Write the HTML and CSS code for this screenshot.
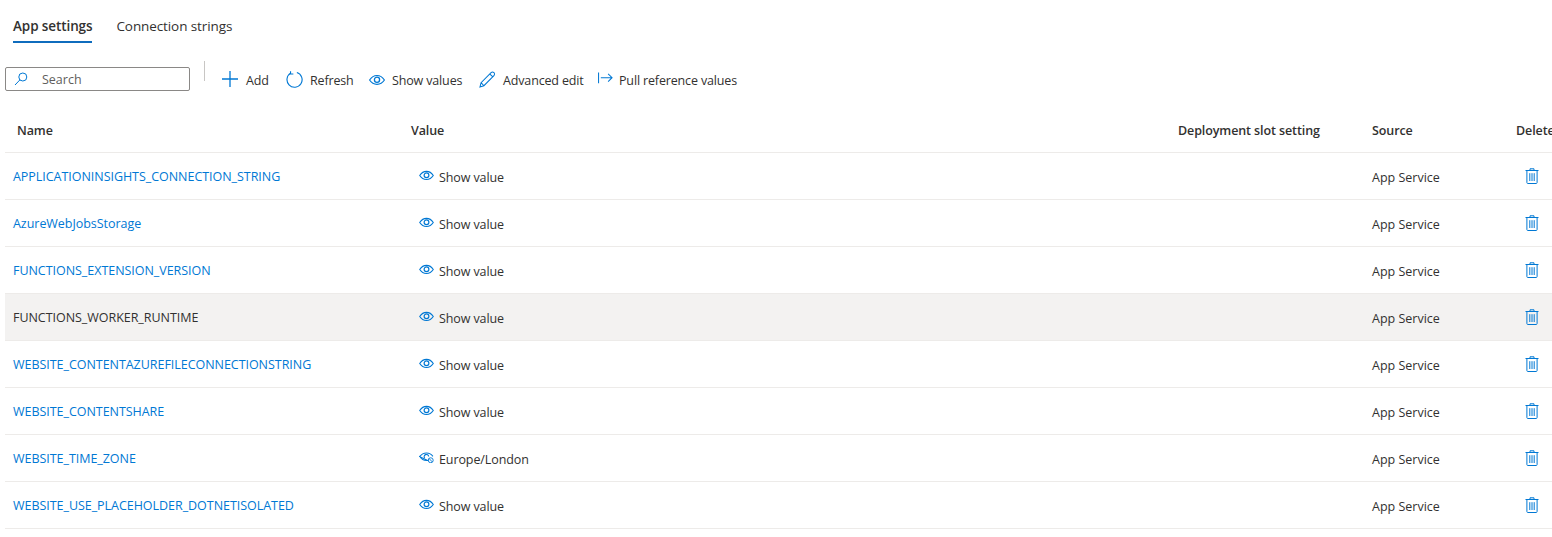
FILE: index.html
```html
<!DOCTYPE html>
<html lang="en">
<head>
<meta charset="utf-8">
<title>App settings</title>
<link rel="stylesheet" href="styles.css">
</head>
<body>
<svg class="defs" width="0" height="0" aria-hidden="true">
  <symbol id="eye" viewBox="0 0 16 12">
    <path d="M.6 6C2.400 3.200 5 1.500 8 1.500S13.600 3.200 15.400 6C13.600 8.800 11 10.300 8 10.300S2.400 8.800.6 6Z" fill="none" stroke="currentColor" stroke-width="1.200"/>
    <circle cx="8" cy="5.800" r="2.600" fill="none" stroke="currentColor" stroke-width="1.300"/>
  </symbol>
  <symbol id="trash" viewBox="0 0 14 16">
    <path d="M.5 2.500h13M5 2.500V.8h4v1.700M1.900 2.500v12.100c0 .5.3.9.8.9h8.600c.5 0 .8-.4.8-.9V2.500M4.800 5.200v7.800M7 5.200v7.800M9.200 5.200v7.800" fill="none" stroke="currentColor" stroke-width="1"/>
  </symbol>
</svg>
<nav class="tabs">
  <span class="tab active">App settings</span>
  <span class="tab">Connection strings</span>
</nav>
<div class="toolbar">
  <label class="search">
    <svg class="search-icon" viewBox="0 0 14 14"><circle cx="8.800" cy="5" r="4" fill="none" stroke="currentColor"/><path d="M5.900 7.900 1 13" fill="none" stroke="currentColor"/></svg>
    <span>Search</span>
  </label>
  <span class="divider"></span>
  <div class="commands">
    <span class="cmd cmd-add"><svg class="ic17" viewBox="0 0 17 17"><path d="M9 0v16M1 8h16" fill="none" stroke="currentColor" stroke-width="1.300"/></svg><span>Add</span></span>
    <span class="cmd cmd-refresh"><svg class="ic17" viewBox="0 0 18 18"><path d="M5.200 2.200A8 8 0 1 0 11.500 1.600M4.800 .2v3h3" fill="none" stroke="currentColor" stroke-width="1.200"/></svg><span>Refresh</span></span>
    <span class="cmd cmd-show"><svg class="ic-eye"><use href="#eye"/></svg><span>Show values</span></span>
    <span class="cmd cmd-edit"><svg class="ic17" viewBox="0 0 18 18"><path d="M1 17l1.200-4.600L12.800 1.800c.8-.8 2.200-.8 3 0s.8 2.200 0 3L5.200 15.600 1 17ZM2.200 12.400l3 3.200M11.500 3.200l3.200 3" fill="none" stroke="currentColor" stroke-width="1.100"/></svg><span>Advanced edit</span></span>
    <span class="cmd cmd-pull"><svg class="ic-pull" viewBox="0 0 16 12"><path d="M.6 0v11.500M3 5.700h12M10.800 1.500l4.200 4.200-4.200 4.200" fill="none" stroke="currentColor" stroke-width="1.100"/></svg><span>Pull reference values</span></span>
  </div>
</div>
<table class="grid">
  <thead>
    <tr>
      <th class="c-name">Name</th>
      <th class="c-value">Value</th>
      <th class="c-slot">Deployment slot setting</th>
      <th class="c-source">Source</th>
      <th class="c-del">Delete</th>
    </tr>
  </thead>
  <tbody>
    <tr><td class="c-name"><a>APPLICATIONINSIGHTS_CONNECTION_STRING</a></td><td class="c-value"><span class="val"><svg class="ic-eye"><use href="#eye"/></svg>Show value</span></td><td></td><td class="c-source">App Service</td><td class="c-del"><svg class="ic-trash"><use href="#trash"/></svg></td></tr>
    <tr><td class="c-name"><a>AzureWebJobsStorage</a></td><td class="c-value"><span class="val"><svg class="ic-eye"><use href="#eye"/></svg>Show value</span></td><td></td><td class="c-source">App Service</td><td class="c-del"><svg class="ic-trash"><use href="#trash"/></svg></td></tr>
    <tr><td class="c-name"><a>FUNCTIONS_EXTENSION_VERSION</a></td><td class="c-value"><span class="val"><svg class="ic-eye"><use href="#eye"/></svg>Show value</span></td><td></td><td class="c-source">App Service</td><td class="c-del"><svg class="ic-trash"><use href="#trash"/></svg></td></tr>
    <tr class="hover"><td class="c-name">FUNCTIONS_WORKER_RUNTIME</td><td class="c-value"><span class="val"><svg class="ic-eye"><use href="#eye"/></svg>Show value</span></td><td></td><td class="c-source">App Service</td><td class="c-del"><svg class="ic-trash"><use href="#trash"/></svg></td></tr>
    <tr><td class="c-name"><a>WEBSITE_CONTENTAZUREFILECONNECTIONSTRING</a></td><td class="c-value"><span class="val"><svg class="ic-eye"><use href="#eye"/></svg>Show value</span></td><td></td><td class="c-source">App Service</td><td class="c-del"><svg class="ic-trash"><use href="#trash"/></svg></td></tr>
    <tr><td class="c-name"><a>WEBSITE_CONTENTSHARE</a></td><td class="c-value"><span class="val"><svg class="ic-eye"><use href="#eye"/></svg>Show value</span></td><td></td><td class="c-source">App Service</td><td class="c-del"><svg class="ic-trash"><use href="#trash"/></svg></td></tr>
    <tr><td class="c-name"><a>WEBSITE_TIME_ZONE</a></td><td class="c-value"><span class="val"><svg class="ic-eye" viewBox="0 0 16 12"><path d="M.6 5C2.400 2.400 5 1 8 1s5.400 1.400 7 3.800M9.500 9.300c-.5.100-1 .1-1.500.1C5 9.400 2.400 7.800.6 5Z" fill="none" stroke="currentColor" stroke-width="1.100"/><path d="M6 6.800A2.500 2.500 0 1 1 10.400 5" fill="none" stroke="currentColor" stroke-width="1.200"/><circle cx="12.600" cy="9" r="2.700" fill="none" stroke="currentColor"/><path d="M10.900 7.200l3.400 3.600" stroke="currentColor"/></svg>Europe/London</span></td><td></td><td class="c-source">App Service</td><td class="c-del"><svg class="ic-trash"><use href="#trash"/></svg></td></tr>
    <tr><td class="c-name"><a>WEBSITE_USE_PLACEHOLDER_DOTNETISOLATED</a></td><td class="c-value"><span class="val"><svg class="ic-eye"><use href="#eye"/></svg>Show value</span></td><td></td><td class="c-source">App Service</td><td class="c-del"><svg class="ic-trash"><use href="#trash"/></svg></td></tr>
  </tbody>
</table>
</body>
</html>
```
FILE: styles.css
```css
* { box-sizing: border-box; }
html, body { height: 100%; }
body {
  margin: 0;
  background: #fff;
  color: #323130;
  font-family: "Open Sans", "Noto Sans", sans-serif;
  font-size: 12.5px;
  overflow: hidden;
}
.defs { display: block; height: 0; }
.tabs {
  display: flex;
  gap: 24px;
  height: 43px;
  padding-left: 13px;
}
.tab {
  display: flex;
  align-items: center;
  height: 43px;
  padding-top: 11px;
  font-size: 13.5px;
  letter-spacing: -0.1px;
  border-bottom: 2px solid transparent;
}
.tab.active {
  font-weight: 600;
  border-bottom-color: #0f6cbd;
}
.toolbar {
  display: flex;
  align-items: flex-start;
  height: 66px;
  padding: 18px 0 0 5px;
}
.search {
  display: flex;
  align-items: center;
  gap: 14px;
  width: 185px;
  height: 24px;
  margin-top: 6px;
  padding-left: 8px;
  border: 1px solid #8a8886;
  border-radius: 2px;
  color: #605e5c;
}
.search-icon { width: 14px; height: 14px; color: #0078d4; }
.divider {
  width: 1px;
  height: 20px;
  margin: 0 0 0 14px;
  background: #c8c6c4;
}
.commands {
  display: flex;
  align-items: center;
  height: 32px;
  margin: 3px 0 0 16px;
  letter-spacing: -0.15px;
}
.cmd { display: flex; align-items: center; white-space: nowrap; }
.cmd svg { color: #0078d4; flex: none; }
.ic17 { width: 17px; height: 17px; margin-top: -2px; }
.cmd-add { gap: 8px; width: 65px; }
.cmd-refresh { gap: 7px; width: 83px; }
.cmd-show { gap: 7px; width: 110px; }
.cmd-edit { gap: 7px; width: 119px; }
.cmd-pull { gap: 6px; }
.ic-pull { width: 15px; height: 12px; margin-top: -4px; }
.ic-eye { width: 16px; height: 12px; color: #0078d4; flex: none; }
.grid {
  border-collapse: collapse;
  table-layout: fixed;
  width: 1560px;
  margin-left: 5px;
}
.grid th {
  height: 43px;
  padding: 0 0 0 12px;
  font-weight: 600;
  letter-spacing: -0.1px;
  text-align: left;
  border-bottom: 1px solid #edebe9;
  white-space: nowrap;
}
.grid td {
  height: 47px;
  padding: 2px 0 0 8px;
  border-bottom: 1px solid #edebe9;
  white-space: nowrap;
}
.grid th.c-value { padding-left: 0; }
.grid th.c-slot { padding-left: 0; }
.grid th:nth-child(1) { width: 406px; }
.grid th:nth-child(2) { width: 767px; }
.grid th:nth-child(3) { width: 194px; }
.grid th:nth-child(4) { width: 144px; }
.grid .c-source { padding-left: 0; }
.grid td.c-source { padding-top: 4px; }
.grid .c-del { padding-left: 0; }
.grid td.c-del { padding-left: 9px; }
.grid td.c-value { padding-top: 4px; }
.grid td.c-name { letter-spacing: -0.04px; }
.grid a { color: #0078d4; }
.val { display: flex; align-items: center; gap: 4px; letter-spacing: -0.1px; }
.val .ic-eye { margin-top: -4px; width: 15px; height: 11px; margin-right: 1px; }
.grid tr.hover td { background: #f3f2f1; }
.ic-trash { display: block; width: 14px; height: 16px; color: #0078d4; margin-top: -2px; }
```
